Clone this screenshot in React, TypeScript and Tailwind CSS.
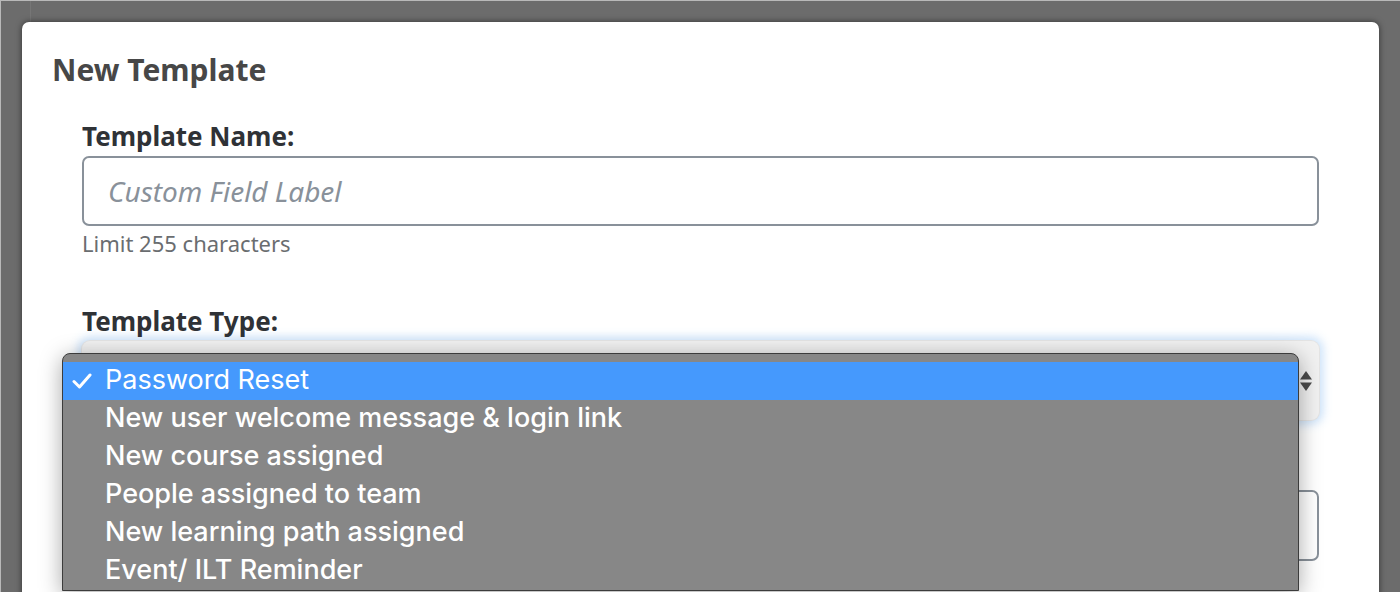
import { useState } from "react";

const TEMPLATE_TYPES = [
  "Password Reset",
  "New user welcome message & login link",
  "New course assigned",
  "People assigned to team",
  "New learning path assigned",
  "Event/ ILT Reminder",
];

function Check() {
  return (
    <svg width="20" height="18" viewBox="0 0 20 18" className="shrink-0">
      <polyline
        points="2,9.5 7.5,15 18,3"
        fill="none"
        stroke="white"
        strokeWidth="3"
        strokeLinecap="round"
        strokeLinejoin="round"
      />
    </svg>
  );
}

function SelectArrows() {
  return (
    <svg width="14" height="22" viewBox="0 0 14 22">
      <polygon points="7,1 13,9.5 1,9.5" fill="#4a4a4a" />
      <polygon points="1,12.5 13,12.5 7,21" fill="#4a4a4a" />
    </svg>
  );
}

function App() {
  const [selected] = useState(0);

  return (
    <div className="relative h-[592px] w-[1400px] overflow-hidden border-l border-t border-[#b9b9b9] bg-[#6c6c6c]">
      <div className="ml-[29px] h-[21px] border-l border-[#767676]" />
      <div className="relative ml-[21px] h-[600px] w-[1357px] rounded-t-[7px] bg-white pl-[30px] pt-[32px] shadow-[0_0_6px_rgba(0,0,0,0.55)] [font-family:'Noto_Sans',sans-serif]">
        <h2 className="text-[30px] font-bold leading-[32px] text-[#474747]">New Template</h2>

        <div className="pl-[30px] pr-[60px]">
          <label className="mt-[35px] block text-[26px] font-bold leading-[30px] text-[#2f3236]">
            Template Name:
          </label>
          <div className="mt-[5px] flex h-[70px] items-center rounded-[7px] border-2 border-[#89919a] px-[24px]">
            <span className="text-[28px] italic text-[#89919a]">Custom Field Label</span>
          </div>
          <p className="mt-[4px] text-[22px] leading-[26px] text-[#6a6d70]">Limit 255 characters</p>

          <label className="mt-[50px] block text-[26px] font-bold leading-[30px] text-[#2f3236]">
            Template Type:
          </label>
          <div className="mt-[5px] flex h-[79px] items-center justify-end rounded-[8px] bg-[#f1f1f1] pr-[6px] shadow-[0_0_0_1px_#e4e4e4,0_0_10px_4px_rgba(140,190,245,0.45)]">
            <SelectArrows />
          </div>

          <div className="mt-[70px] h-[71px] rounded-[7px] border-2 border-[#89919a]" />
        </div>

        {/* open option list of the type select */}
        <div className="absolute left-[40px] top-[331px] w-[1237px] overflow-hidden rounded-t-[8px] border border-[#3c3c3c] bg-[#878787] pt-[8px] shadow-[0_4px_22px_rgba(0,0,0,0.35)] [font-family:Inter,sans-serif]">
          {TEMPLATE_TYPES.map((t, i) => (
            <div
              key={t}
              className={`flex h-[38px] items-center pb-[3px] text-[27px] leading-none text-white ${
                i === selected ? "bg-[#4599fd] font-normal" : "font-medium"
              }`}
            >
              <span className="flex w-[42px] justify-end pr-[13px] pt-[3px]">{i === selected && <Check />}</span>
              <span>{t}</span>
            </div>
          ))}
        </div>
      </div>
    </div>
  );
}

export default App;
